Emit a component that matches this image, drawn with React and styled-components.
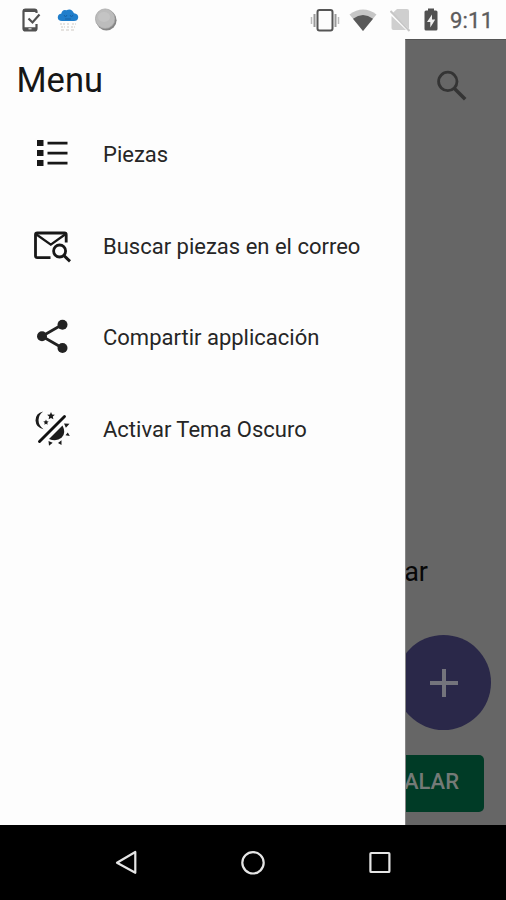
import React from 'react';
import styled, { createGlobalStyle } from 'styled-components';

const GlobalStyle = createGlobalStyle`
  * { box-sizing: border-box; }
  html, body { margin: 0; padding: 0; }
  body { font-family: Roboto, "Liberation Sans", sans-serif; background: #fdfdfd; overflow: hidden; }
  svg { display: block; flex: none; }
`;

const Screen = styled.div`
  width: 506px;
  height: 900px;
  display: grid;
  grid-template-rows: 39px 786px 75px;
  overflow: hidden;
`;

const StatusBar = styled.header`
  display: flex;
  justify-content: space-between;
  align-items: center;
  padding: 0 12px 0 20.5px;
  background: #fdfdfd;
`;

const StatusGroup = styled.div`
  display: flex;
  align-items: center;
  gap: ${(p) => p.$gap}px;
`;

const Clock = styled.time`
  width: 44px;
  margin-left: -1px;
  font-size: 22px;
  line-height: 39px;
  letter-spacing: 0.2px;
  color: #5c5c5c;
  padding-top: 2px;
  white-space: nowrap;
  -webkit-text-stroke: 0.35px #5c5c5c;
`;

const Main = styled.main`
  display: grid;
  grid-template-columns: 405px 101px;
`;

const Drawer = styled.nav`
  background: #fdfdfd;
`;

const DrawerTitle = styled.h1`
  height: 68px;
  margin: 0;
  padding: 14px 0 0 16.5px;
  font-size: 34.5px;
  line-height: 54px;
  font-weight: 400;
  color: #161616;
`;

const MenuList = styled.ul`
  margin: 0;
  padding: 0;
  list-style: none;
`;

const MenuItem = styled.li`
  height: 91.7px;
  display: flex;
  align-items: center;
  gap: 31px;
  padding-left: 32px;
`;

const MenuLabel = styled.span`
  font-size: 22px;
  line-height: 30px;
  color: #262626;
  padding-top: 4px;
  white-space: nowrap;
`;

const DimmedPage = styled.section`
  display: flex;
  flex-direction: column;
  align-items: flex-end;
  overflow: hidden;
  background: #666;
  border-left: 1px solid #858585;
  border-top: 1px solid #555;
`;

const SearchButton = styled.div`
  padding: 30px 39px 0 0;
`;

const EmptyText = styled.p`
  margin: 453px 78px 0 0;
  height: 34px;
  font-size: 27px;
  line-height: 34px;
  color: #080808;
  white-space: nowrap;
`;

const AddButton = styled.div`
  width: 95px;
  height: 95px;
  margin: 46px 15px 0 0;
  flex: none;
  display: grid;
  place-items: center;
  border-radius: 50%;
  background: #2a2849;
`;

const InstallButton = styled.div`
  width: 158px;
  height: 57px;
  margin: 25px 22px 0 0;
  padding: 0 25px 5px 0;
  flex: none;
  display: flex;
  align-items: center;
  justify-content: flex-end;
  border-radius: 5px;
  background: #003b26;
  color: #747a77;
  font-size: 22px;
  font-weight: 500;
`;

const NavigationBar = styled.footer`
  display: flex;
  justify-content: center;
  align-items: center;
  gap: 99px;
  background: #000;
`;

const PhoneCheckIcon = () => (
  <svg width="20" height="26" viewBox="0 0 20 26" fill="none" stroke="#515151">
    <path d="M15.5 6V4.5Q15.5 2.5 13.5 2.5H4.5Q2.5 2.5 2.5 4.5V21.5Q2.5 23.5 4.5 23.5H13.5Q15.5 23.5 15.5 21.5V17" strokeWidth="2.2" />
    <path d="M2.5 3.5H15M2.5 21.8H15.5" strokeWidth="3" />
    <path d="M7.5 11.5 11.5 15.5 18.5 7.5" strokeWidth="2.2" />
    <path d="M7.5 21.8H10.5" stroke="#ddd" strokeWidth="1.2" />
  </svg>
);

const RainCloudIcon = () => (
  <svg width="22" height="24" viewBox="0 0 22 24">
    <path d="M5 13Q.5 12.5.8 9Q1 6 4.2 5.8Q5.2 1 9.4 2.2Q14.5-.3 17 5.2Q21.5 6 21.2 9.5Q20.8 13 17 13Z" fill="#207ecb" />
    <path d="m7 7 1.5 2L10 7m3 0 1.5 2L16 7M8 11h6" fill="none" stroke="#1762a5" strokeWidth="1" />
    <path d="M3 16h5M10 16h3M15 16h4M4 19h4M10 19h2M14 19h4" stroke="#cfc9c4" strokeWidth="1" strokeDasharray="2 1" />
    <path d="M4 22h15" stroke="#dedad6" strokeWidth="1.5" strokeDasharray="3 2" />
  </svg>
);

const BallIcon = () => (
  <svg width="24" height="24" viewBox="0 0 24 24">
    <circle cx="11.4" cy="12.2" r="10.2" fill="#858585" />
    <circle cx="10.2" cy="10.7" r="9.8" fill="#bcbcbc" stroke="#a3a3a3" strokeWidth=".7" />
    <ellipse cx="9" cy="9" rx="6" ry="5" fill="#c4c4c4" />
  </svg>
);

const VibrateIcon = () => (
  <svg width="30" height="26" viewBox="0 0 30 26" fill="none">
    <rect x="7.5" y="3" width="15" height="20.5" rx="2" stroke="#555" strokeWidth="2" />
    <path d="M4.5 7V20M25.5 7V20" stroke="#999" strokeWidth="2" />
    <path d="M1.5 10V17M28.5 10V17" stroke="#bbb" strokeWidth="1.5" />
  </svg>
);

const WifiIcon = () => (
  <svg width="28" height="24" viewBox="0 0 28 24">
    <path d="M.5 6.5Q14-3.5 27.5 6.5L14 23Z" fill="#c6c6c6" />
    <path d="M4 10.7Q14 3.5 24 10.7L14 23Z" fill="#595959" />
  </svg>
);

const NoSimIcon = () => (
  <svg width="21" height="24" viewBox="0 0 21 24">
    <path d="M7 1H17Q19 1 19 3V21L3 4.8ZM1.5 8 16 22H3.5Q1.5 22 1.5 20Z" fill="#cfcfcf" />
    <path d="m.5 3 19 20" stroke="#c7c7c7" strokeWidth="2" />
  </svg>
);

const BatteryIcon = () => (
  <svg width="14" height="24" viewBox="0 0 14 24">
    <path d="M4 .5h6v2h2q1.5 0 1.5 1.5v17q0 1.5-1.5 1.5H2Q.5 22.5 .5 21v-17Q.5 2.5 2 2.5h2Z" fill="#515151" />
    <path d="m8 6.5-5 7.5h3.3V19.5l4.9-8H8Z" fill="#efefef" />
  </svg>
);

const ListIcon = () => (
  <svg width="40" height="40" viewBox="0 0 40 40" fill="#181818">
    <path d="M5 7h6.5v6H5zM5 17h6.5v6H5zM5 27h6.5v6H5zM15.5 8.7h20v2.8h-20zM15.5 18.7h20v2.8h-20zM15.5 28.7h20v2.8h-20z" />
  </svg>
);

const MailSearchIcon = () => (
  <svg width="40" height="40" viewBox="0 0 40 40" fill="none" stroke="#181818" strokeWidth="2.8">
    <path d="M18.5 32.7H5.3Q3.5 32.7 3.5 31V9.7Q3.5 8 5.3 8H32.5Q34.2 8 34.2 9.7V17.5" />
    <path d="m4.5 9.5 14.3 10.2L33 9.5" strokeWidth="2.3" />
    <circle cx="27.6" cy="26" r="6" />
    <path d="m32 30.6 6 5.8" strokeWidth="2.9" />
  </svg>
);

const ShareIcon = () => (
  <svg width="40" height="40" viewBox="0 0 40 40" fill="#222" stroke="#222">
    <path d="M30 8.8 10 20.2 30 31.7" fill="none" strokeWidth="2.8" />
    <g stroke="none"><circle cx="30.5" cy="8.8" r="5" /><circle cx="10" cy="20.2" r="5" /><circle cx="30.5" cy="32" r="5" /></g>
  </svg>
);

const ThemeIcon = () => (
  <svg width="40" height="40" viewBox="0 0 40 40" fill="#1c1c1c">
    <path d="m7.5 33.5 25-25" fill="none" stroke="#111" strokeWidth="2.9" strokeLinecap="round" />
    <path d="M11.2 3.5Q3.5 5 3.5 12.6Q4 20 11.5 21.2Q6.5 17.5 6.5 12Q6.6 6.7 11.2 3.5Z" />
    <path d="m19 4 1.1 2.5 2.8.2-2.1 1.8.6 2.8-2.4-1.4-2.4 1.4.6-2.8-2.1-1.8 2.8-.2ZM14 11.5l.8 1.7 1.9.2-1.4 1.4.3 1.9-1.6-.9-1.6.9.3-1.9-1.4-1.4 1.9-.2Z" />
    <path d="M30.5 17.5Q34.5 25 29.5 29.8Q24.5 34 17 31Z" />
    <path d="m32 15.5 5.5.2-3.6 4ZM35.8 24.5l2 3.5-4.3-.7ZM26 35l3.5-2.7 0 4.8ZM16.5 33l4.2 1.7-3.7 3Z" />
  </svg>
);

const SearchIcon = () => (
  <svg width="30" height="32" viewBox="0 0 30 32" fill="none" stroke="#343434">
    <circle cx="10.8" cy="11.4" r="9.2" strokeWidth="2.8" />
    <path d="m17.4 18.4 10.8 10.8" strokeWidth="3.5" />
  </svg>
);

const PlusIcon = () => (
  <svg width="30" height="30" viewBox="0 0 30 30" stroke="#74747c" strokeWidth="4">
    <path d="M15 1V29M1 15H29" />
  </svg>
);

const BackIcon = () => (
  <svg width="28" height="28" viewBox="0 0 28 28" fill="none" stroke="#e5e5e5" strokeWidth="2.2" strokeLinejoin="round">
    <path d="M23.3 3V23.8L5 13.7Z" />
  </svg>
);

const HomeIcon = () => (
  <svg width="28" height="28" viewBox="0 0 28 28" fill="none" stroke="#e5e5e5" strokeWidth="2.2">
    <circle cx="14" cy="13.8" r="10.7" />
  </svg>
);

const RecentsIcon = () => (
  <svg width="28" height="28" viewBox="0 0 28 28" fill="none" stroke="#e5e5e5" strokeWidth="2.2">
    <rect x="4.4" y="4" width="19" height="19" rx=".8" />
  </svg>
);

const menuItems = [
  { label: 'Piezas', Icon: ListIcon },
  { label: 'Buscar piezas en el correo', Icon: MailSearchIcon },
  { label: 'Compartir applicación', Icon: ShareIcon },
  { label: 'Activar Tema Oscuro', Icon: ThemeIcon },
];

export default function App() {
  return (
    <>
      <GlobalStyle />
      <Screen>
        <StatusBar>
          <StatusGroup $gap={16}>
            <PhoneCheckIcon />
            <RainCloudIcon />
            <BallIcon />
          </StatusGroup>
          <StatusGroup $gap={13}>
            <StatusGroup $gap={9.5}>
              <VibrateIcon />
              <WifiIcon />
            </StatusGroup>
            <NoSimIcon />
            <BatteryIcon />
            <Clock>9:11</Clock>
          </StatusGroup>
        </StatusBar>
        <Main>
          <Drawer>
            <DrawerTitle>Menu</DrawerTitle>
            <MenuList>
              {menuItems.map(({ label, Icon }) => (
                <MenuItem key={label}>
                  <Icon />
                  <MenuLabel>{label}</MenuLabel>
                </MenuItem>
              ))}
            </MenuList>
          </Drawer>
          <DimmedPage>
            <SearchButton><SearchIcon /></SearchButton>
            <EmptyText>ar</EmptyText>
            <AddButton><PlusIcon /></AddButton>
            <InstallButton>ALAR</InstallButton>
          </DimmedPage>
        </Main>
        <NavigationBar>
          <BackIcon />
          <HomeIcon />
          <RecentsIcon />
        </NavigationBar>
      </Screen>
    </>
  );
}
